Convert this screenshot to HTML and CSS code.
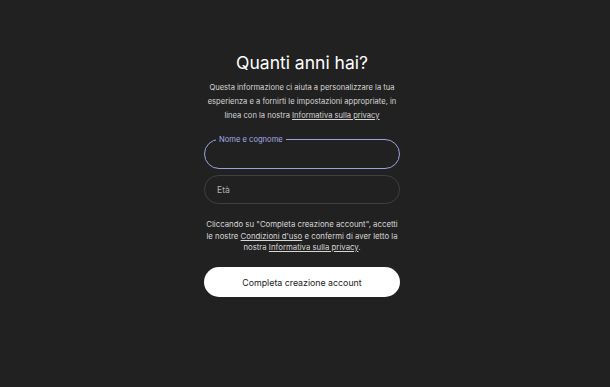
FILE: index.html
```html
<!DOCTYPE html>
<html lang="it">
<head>
    <meta charset="UTF-8">
    <meta name="viewport" content="width=device-width, initial-scale=1.0">
    <title>Quanti anni hai?</title>
    <link rel="stylesheet" href="styles.css">
</head>
<body>
    <main class="page">
        <h1 class="title">Quanti anni hai?</h1>
        <p class="intro">Questa informazione ci aiuta a personalizzare la tua esperienza e a fornirti le impostazioni appropriate, in linea con la nostra <a href="#">Informativa sulla privacy</a></p>
        <form class="form">
            <fieldset class="field field-active">
                <legend>Nome e cognome</legend>
                <input type="text" name="name">
            </fieldset>
            <div class="field">
                <input type="text" name="age" placeholder="Età">
            </div>
            <p class="terms">Cliccando su "Completa creazione account", accetti le nostre <a href="#">Condizioni d'uso</a> e confermi di aver letto la nostra <a href="#">Informativa sulla privacy</a>.</p>
            <button type="button" class="submit">Completa creazione account</button>
        </form>
    </main>
</body>
</html>
```

FILE: styles.css
```css
html, body {
    margin: 0;
    padding: 0;
    height: 100%;
}
body {
    font-family: Inter, 'Noto Sans', sans-serif;
    background: #212121;
    color: #ececec;
    padding-right: 6px;
    box-sizing: border-box;
}
.page {
    width: 196px;
    margin: 0 auto;
    padding-top: 50px;
    display: flex;
    flex-direction: column;
    align-items: center;
    text-align: center;
}
.title {
    font-size: 17.5px;
    font-weight: 400;
    margin: 0;
    line-height: 26px;
    color: #fff;
}
.intro {
    font-size: 7.6px;
    line-height: 14px;
    color: #d6d6d6;
    margin: 5px 0 0;
}
a {
    color: inherit;
    text-decoration: underline;
}
.form {
    width: 100%;
    margin-top: 12.5px;
    display: flex;
    flex-direction: column;
}
.field {
    box-sizing: border-box;
    height: 29px;
    border: 1px solid #404040;
    border-radius: 15px;
    margin: 0;
    padding: 0 12px;
    display: flex;
    align-items: center;
    min-width: 0;
    text-align: left;
}
.field-active {
    display: block;
    height: 33px;
    border-color: #9ca2dc;
    padding: 0 10px;
}
.field legend {
    font-size: 7.6px;
    color: #a5abe6;
    padding: 0 3px;
    line-height: 8px;
    margin-left: 1px;
}
.field input {
    background: transparent;
    border: none;
    outline: none;
    color: #ececec;
    font-family: inherit;
    font-size: 8.6px;
    width: 100%;
    padding: 0;
}
.field input::placeholder {
    color: #b4b4b4;
}
.field + .field {
    margin-top: 6.5px;
}
.terms {
    font-size: 7.8px;
    line-height: 11.5px;
    color: #d6d6d6;
    margin: 15px 0 0;
}
.submit {
    margin-top: 13.5px;
    height: 30px;
    border: none;
    border-radius: 15px;
    background: #fff;
    color: #1a1a1a;
    font-family: inherit;
    font-size: 8.8px;
}
```
